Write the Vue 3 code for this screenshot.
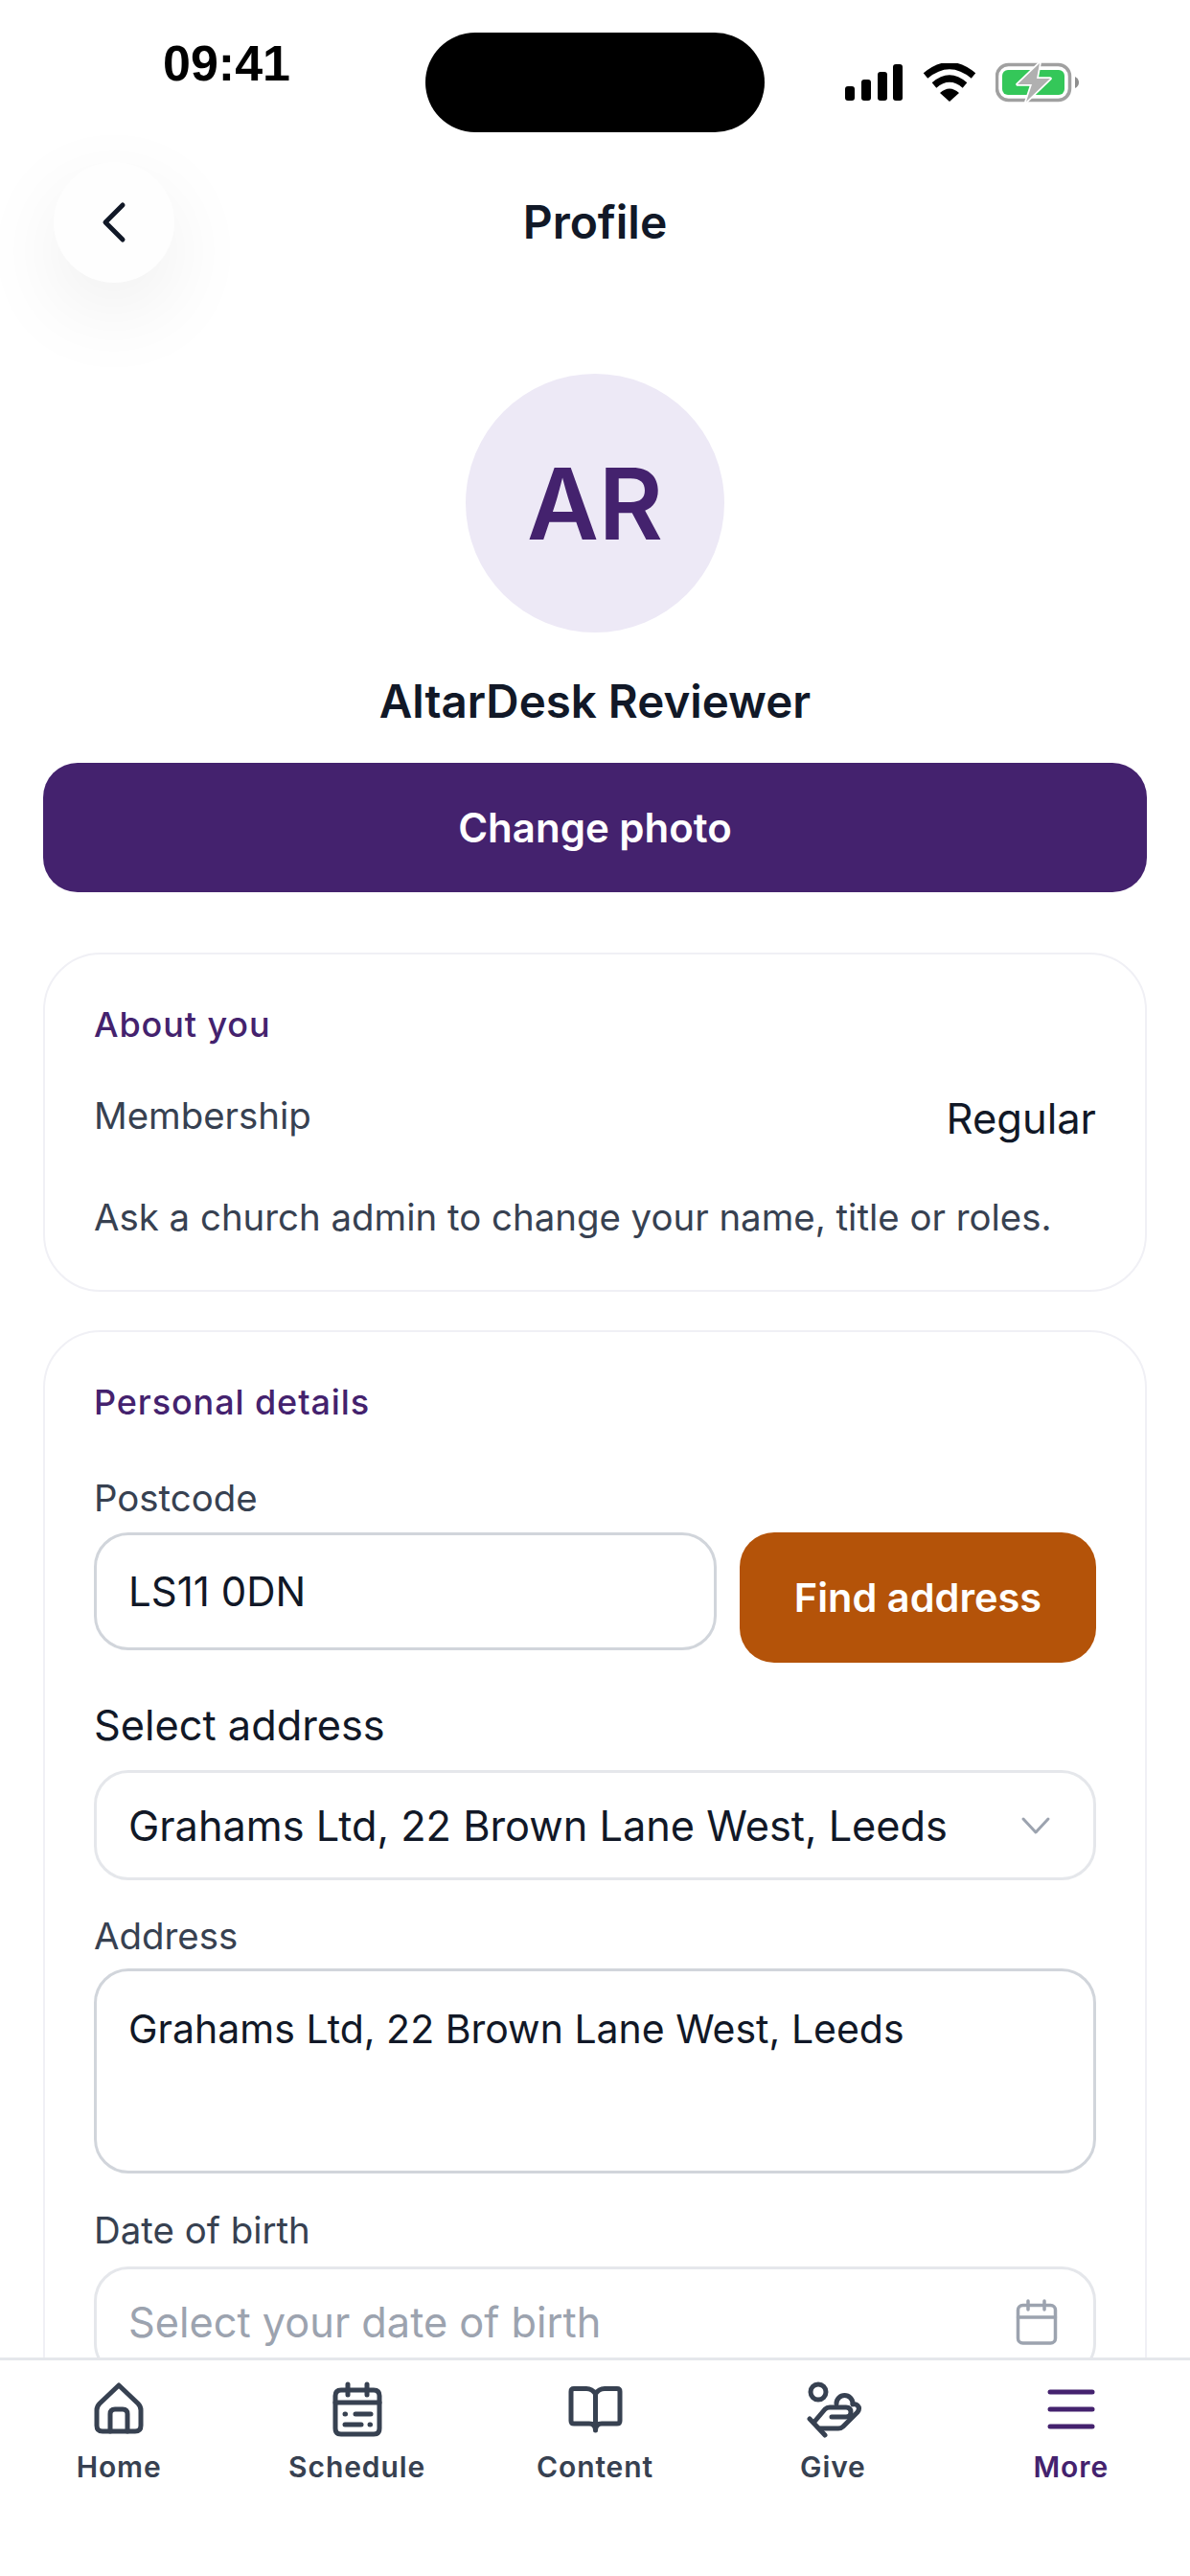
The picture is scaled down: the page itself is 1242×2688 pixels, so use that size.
<template>
  <div class="screen">
    <div class="status-bar">
      <span class="time">09:41</span>
      <div class="island"></div>
      <div class="status-icons">
        <svg width="62" height="40" viewBox="0 0 62 40">
          <rect x="1" y="24" width="10" height="15" rx="3" />
          <rect x="18" y="17" width="10" height="22" rx="3" />
          <rect x="35" y="9" width="10" height="30" rx="3" />
          <rect x="51" y="1" width="10" height="38" rx="3" />
        </svg>
        <svg width="56" height="40" viewBox="0 0 56 40">
          <path d="M3 13 Q28 -8 53 13" fill="none" stroke="#000" stroke-width="7" />
          <path d="M12 23 Q28 9 44 23" fill="none" stroke="#000" stroke-width="7" />
          <path d="M18 31 Q28 22 38 31 L28 40 Z" />
        </svg>
        <svg width="88" height="42" viewBox="0 0 88 42">
          <rect x="1.5" y="2.5" width="76" height="37" rx="12" fill="none" stroke="#a0a0a0" stroke-width="3.5" />
          <rect x="7" y="8" width="65" height="26" rx="6" fill="#34c759" />
          <path d="M83 15 Q87 17 87 21 Q87 25 83 27 Z" fill="#8e8e8e" />
          <path d="M46 1 L23 23 H38 L32 41 L57 17 H43 Z" fill="#b0b0b0" stroke="#fff" stroke-width="3.5" paint-order="stroke" stroke-linejoin="round" />
        </svg>
      </div>
    </div>

    <header class="top-bar">
      <button class="back-button">
        <svg width="36" height="48" viewBox="0 0 36 48">
          <path d="M27 6 L9 24 L27 42" fill="none" stroke="#111827" stroke-width="5" stroke-linecap="round" stroke-linejoin="round" />
        </svg>
      </button>
      <h1 class="page-title">Profile</h1>
    </header>

    <main class="content">
      <section class="avatar-block">
        <div class="avatar">AR</div>
        <div class="user-name">AltarDesk Reviewer</div>
      </section>
      <button class="photo-button">Change photo</button>

      <section class="card">
        <h2 class="card-title">About you</h2>
        <div class="member-row">
          <span class="field-label">Membership</span>
          <span class="member-value">Regular</span>
        </div>
        <p class="hint">Ask a church admin to change your name, title or roles.</p>
      </section>

      <section class="card">
        <h2 class="card-title">Personal details</h2>
        <label class="field-label postcode-label">Postcode</label>
        <div class="postcode-row">
          <div class="input postcode-input">LS11 0DN</div>
          <button class="find-button">Find address</button>
        </div>
        <label class="select-label">Select address</label>
        <div class="input select-input">
          <span>Grahams Ltd, 22 Brown Lane West, Leeds</span>
          <svg width="36" height="36" viewBox="0 0 36 36">
            <path d="M5 11 L18 25 L31 11" fill="none" stroke="#9ca3af" stroke-width="3" stroke-linecap="round" stroke-linejoin="round" />
          </svg>
        </div>
        <label class="field-label address-label">Address</label>
        <div class="input textarea">Grahams Ltd, 22 Brown Lane West, Leeds</div>
        <label class="field-label birth-label">Date of birth</label>
        <div class="input select-input placeholder">
          <span>Select your date of birth</span>
          <svg width="48" height="48" viewBox="0 0 48 48" fill="none" stroke="#9ca3af" stroke-width="3.5" stroke-linecap="round">
            <rect x="5.5" y="6.5" width="39" height="39.5" rx="5" />
            <path d="M5.5 19 H44.5 M16 2 V11 M33 2 V11" />
          </svg>
        </div>
      </section>
    </main>

    <nav class="tab-bar">
      <div v-for="tab in tabs" :key="tab.name" class="tab" :class="{ active: tab.active }">
        <svg width="72" height="72" viewBox="0 0 72 72" fill="none" stroke="currentColor" stroke-width="5" stroke-linecap="round" stroke-linejoin="round">
          <path v-for="d in tab.paths" :key="d" :d="d" />
          <circle v-for="c in tab.circles" :key="c[0]" :cx="c[0]" :cy="c[1]" :r="c[2]" />
        </svg>
        <span>{{ tab.name }}</span>
      </div>
    </nav>
  </div>
</template>

<script setup>
const tabs = [
  {
    name: 'Home',
    paths: [
      'M36 12 L56 31 Q59 34 59 38 V54 Q59 60 53 60 H19 Q13 60 13 54 V38 Q13 34 16 31 Z',
      'M27 60 V42 Q27 37 32 37 H40 Q45 37 45 42 V60',
    ],
  },
  {
    name: 'Schedule',
    paths: [
      'M19 17 H53 Q59 17 59 23 V57 Q59 63 53 63 H19 Q13 63 13 57 V23 Q13 17 19 17 Z',
      'M13 30 H59',
      'M26 11 V22',
      'M46 11 V22',
      'M34 42 H50',
      'M23 42 H23.5',
      'M23 53 H40',
      'M49 53 H49.5',
    ],
  },
  {
    name: 'Content',
    paths: [
      'M36.5 21 Q33 15.5 27 15.5 H14 Q11 15.5 11 18.5 V49 Q11 52 14 52 H30 Q36.5 52 36.5 59 Q36.5 52 43 52 H59 Q62 52 62 49 V18.5 Q62 15.5 59 15.5 H46 Q40 15.5 36.5 21 V59',
    ],
  },
  {
    name: 'Give',
    paths: [
      'M12 47 L28 64',
      'M17 50 L28 37 Q30 35 33 35 H50 Q55 35 55 40 Q55 45 50 45 H35',
      'M23 57 H42 Q45 57 47 55 L62 40 Q65 36 62 33 Q60 31 57 32',
      'M40 31 A8.5 8.5 0 1 1 57 31',
    ],
    circles: [
      [21, 19, 8],
    ],
  },
  {
    name: 'More',
    active: true,
    paths: ['M14 19 H58', 'M14 37 H58', 'M14 55 H58'],
  },
]
</script>

<style>
html,
body {
  margin: 0;
  background: #ffffff;
}
</style>

<style scoped>
.screen {
  width: 1242px;
  height: 2688px;
  display: flex;
  flex-direction: column;
  overflow: hidden;
  background: #ffffff;
  font-family: Inter, "Liberation Sans", sans-serif;
  color: #111827;
}

.status-bar {
  height: 138px;
  padding: 34px 115px 0 170px;
  box-sizing: border-box;
  display: grid;
  grid-template-columns: 274px 354px 1fr;
  align-items: start;
  flex-shrink: 0;
}

.time {
  margin-top: 3px;
  font-family: "Liberation Sans", Arial, sans-serif;
  font-size: 52px;
  line-height: 58px;
  font-weight: 700;
  color: #000;
}

.island {
  width: 354px;
  height: 104px;
  border-radius: 52px;
  background: #000;
}

.status-icons {
  margin-top: 31px;
  display: flex;
  align-items: center;
  justify-content: flex-end;
  gap: 20px;
}

.top-bar {
  height: 124px;
  margin-top: 32px;
  padding-left: 56px;
  position: relative;
  display: flex;
  align-items: center;
  flex-shrink: 0;
}

.back-button {
  width: 126px;
  height: 126px;
  padding: 0;
  border: none;
  border-radius: 50%;
  background: #fefefe;
  box-shadow: 0 30px 90px rgba(0, 0, 0, 0.07);
  display: flex;
  align-items: center;
  justify-content: center;
}

.page-title {
  position: absolute;
  left: 0;
  right: 0;
  margin: 0;
  text-align: center;
  font-size: 48px;
  line-height: 60px;
  font-weight: 600;
}

.content {
  flex: 1;
  min-height: 0;
  overflow: hidden;
  padding: 96px 45px 0;
  display: flex;
  flex-direction: column;
}

.avatar-block {
  display: flex;
  flex-direction: column;
  align-items: center;
}

.avatar {
  width: 270px;
  height: 270px;
  border-radius: 50%;
  background: #ede9f6;
  color: #44226e;
  font-size: 103px;
  font-weight: 600;
  display: flex;
  align-items: center;
  justify-content: center;
}

.user-name {
  margin-top: 42px;
  font-size: 47.5px;
  line-height: 60px;
  font-weight: 600;
}

.photo-button {
  margin-top: 34px;
  height: 135px;
  flex-shrink: 0;
  border: none;
  border-radius: 36px;
  background: #44226e;
  color: #fff;
  font-family: inherit;
  font-size: 42px;
  font-weight: 600;
}

.card {
  margin-top: 63px;
  padding: 49px 51px;
  border: 2px solid #f0f0f5;
  border-radius: 60px;
  flex-shrink: 0;
}

.card + .card {
  margin-top: 40px;
}

.card-title {
  margin: 0;
  font-size: 36px;
  line-height: 48px;
  font-weight: 500;
  letter-spacing: 0.9px;
  color: #44226e;
}

.member-row {
  margin-top: 47px;
  display: flex;
  justify-content: space-between;
  align-items: flex-start;
}

.field-label {
  display: block;
  font-size: 38.4px;
  line-height: 48px;
  color: #374151;
}

.member-value {
  font-size: 43.5px;
  line-height: 54px;
}

.hint {
  margin: 49px 0 0;
  font-size: 38.4px;
  line-height: 54px;
  color: #374151;
}

.postcode-label {
  margin-top: 52px;
}

.postcode-row {
  margin-top: 12px;
  display: flex;
  align-items: flex-start;
  gap: 24px;
}

.input {
  box-sizing: border-box;
  border: 3px solid #e5e7eb;
  border-radius: 36px;
  background: #fff;
  padding: 0 33px;
  font-size: 43.3px;
  color: #111827;
}

.postcode-input {
  flex: 1;
  height: 123px;
  border-color: #d1d5db;
  font-size: 42px;
  display: flex;
  align-items: center;
}

.find-button {
  width: 372px;
  height: 136px;
  border: none;
  border-radius: 36px;
  background: #b45309;
  color: #fff;
  font-family: inherit;
  font-size: 41.5px;
  font-weight: 600;
}

.select-label {
  display: block;
  margin-top: 35px;
  font-size: 43.3px;
  line-height: 60px;
}

.select-input {
  margin-top: 17px;
  height: 115px;
  display: flex;
  align-items: center;
  justify-content: space-between;
  padding-right: 42px;
}

.address-label {
  margin-top: 34px;
}

.textarea {
  margin-top: 10px;
  height: 214px;
  padding-top: 30px;
  font-size: 41px;
  line-height: 60px;
  border-color: #d1d5db;
}

.birth-label {
  margin-top: 35px;
}

.placeholder {
  margin-top: 14px;
  height: 116px;
  padding-right: 36px;
  color: #9ca3af;
}

.tab-bar {
  height: 228px;
  box-sizing: border-box;
  border-top: 3px solid #e5e7eb;
  padding-top: 14px;
  display: grid;
  grid-template-columns: repeat(5, 1fr);
  flex-shrink: 0;
  background: #fff;
}

.tab {
  display: flex;
  flex-direction: column;
  align-items: center;
  color: #374151;
  font-size: 30px;
  line-height: 38px;
  font-weight: 600;
  letter-spacing: 0.9px;
}

.tab span {
  margin-top: 6px;
}

.tab.active {
  color: #44226e;
}

.status-icons svg {
  display: block;
}
</style>
